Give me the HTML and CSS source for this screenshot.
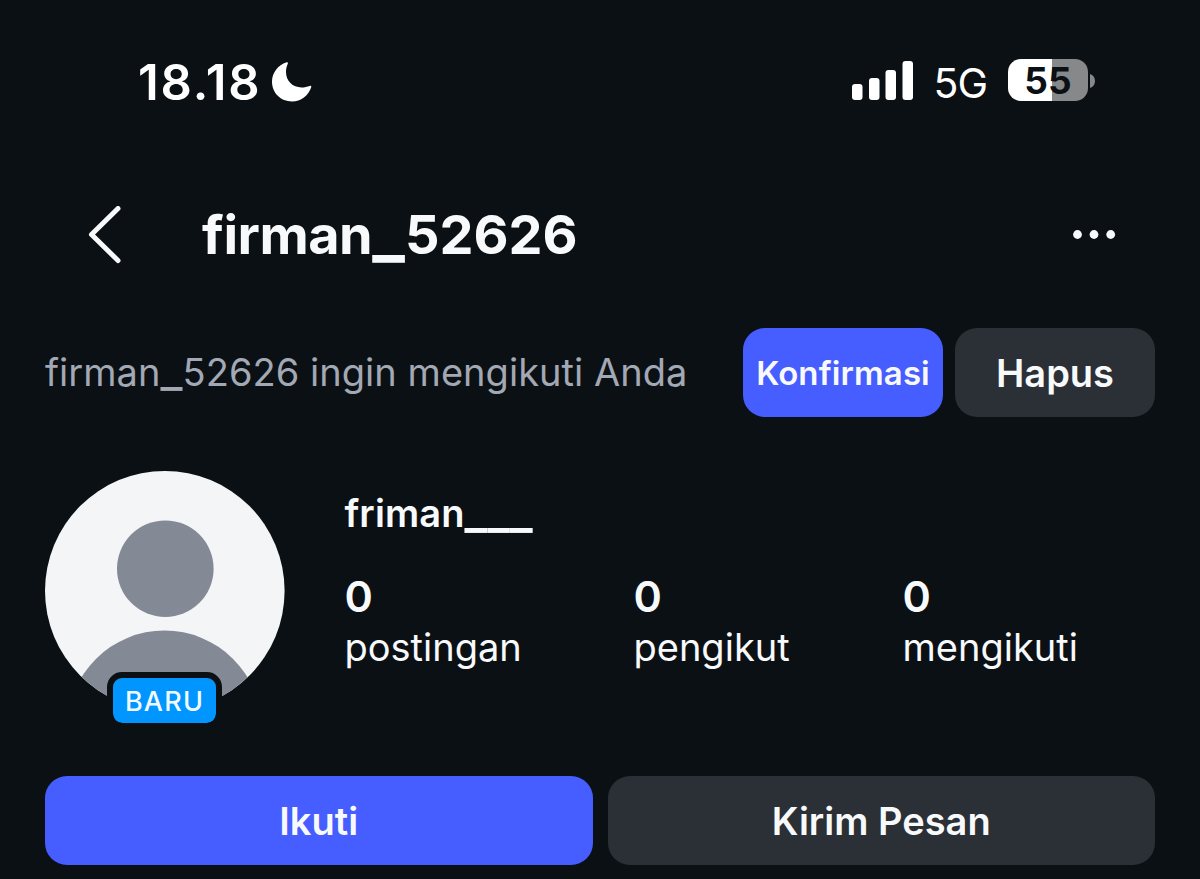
FILE: index.html
```html
<!DOCTYPE html>
<html lang="id">
<head>
    <meta charset="UTF-8">
    <meta name="viewport" content="width=device-width, initial-scale=1.0">
    <title>firman_52626</title>
    <link rel="stylesheet" href="styles.css">
</head>
<body>
    <div class="status-bar">
        <div class="status-left">
            <span class="time">18.18</span>
            <svg class="moon" width="40" height="40" viewBox="0 0 40 40">
                <path d="M14.5 0.3C15.6 0 16.2 0.8 15.8 1.8C14.6 4.4 14 7 14 10C14 19 20.5 25.4 29.5 25.4C32.4 25.4 35.4 24.8 37.8 23.9C38.9 23.5 39.6 24.2 39.2 25.3C36.4 33.8 29 39.5 20 39.5C8.8 39.5 0 31 0 19.8C0 10.8 6 3.2 14.5 0.3Z" fill="#fff"/>
            </svg>
        </div>
        <div class="status-right">
            <svg class="signal" width="62" height="40" viewBox="0 0 62 40">
                <rect x="0" y="22" width="10.5" height="16" rx="3" fill="#fff"/>
                <rect x="17" y="16" width="10.5" height="22" rx="3" fill="#fff"/>
                <rect x="33.5" y="8" width="10.5" height="30" rx="3" fill="#fff"/>
                <rect x="50.5" y="-1" width="10.5" height="39" rx="3" fill="#fff"/>
            </svg>
            <span class="network">5G</span>
            <div class="battery">55</div>
            <svg class="battery-tip" width="5" height="14" viewBox="0 0 5 14">
                <path d="M0 0C3 1 5 3.5 5 7C5 10.5 3 13 0 14Z" fill="#86888a"/>
            </svg>
        </div>
    </div>

    <div class="header">
        <svg class="back" width="34" height="58" viewBox="0 0 34 58">
            <path d="M31 2.5L4.5 28.5L31 54.5" fill="none" stroke="#f7f9fb" stroke-width="5" stroke-linecap="round" stroke-linejoin="round"/>
        </svg>
        <h1><span class="name">firman</span><span class="line">_</span>52626</h1>
        <svg class="more" width="44" height="10" viewBox="0 0 44 10">
            <circle cx="4.5" cy="4.5" r="4.4" fill="#f7f9fb"/>
            <circle cx="21" cy="4.5" r="4.4" fill="#f7f9fb"/>
            <circle cx="37.7" cy="4.5" r="4.4" fill="#f7f9fb"/>
        </svg>
    </div>

    <div class="request">
        <p>firman<span class="line">_</span>52626 ingin mengikuti Anda</p>
        <button class="btn primary small">Konfirmasi</button>
        <button class="btn hapus">Hapus</button>
    </div>

    <div class="profile">
        <div class="avatar">
            <svg width="240" height="240" viewBox="0 0 240 240">
                <clipPath id="circle"><circle cx="119.8" cy="119.8" r="119.8"/></clipPath>
                <g clip-path="url(#circle)">
                    <rect width="240" height="240" fill="#f3f5f7"/>
                    <circle cx="120.3" cy="97.7" r="48.3" fill="#848a95"/>
                    <circle cx="119.5" cy="256.5" r="97" fill="#848a95"/>
                </g>
            </svg>
            <span class="badge">BARU</span>
        </div>
        <div class="info">
            <h2>friman<span class="line">___</span></h2>
            <div class="stats">
                <div class="stat"><b>0</b><span>postingan</span></div>
                <div class="stat"><b>0</b><span>pengikut</span></div>
                <div class="stat"><b>0</b><span>mengikuti</span></div>
            </div>
        </div>
    </div>

    <div class="actions">
        <button class="btn primary">Ikuti</button>
        <button class="btn">Kirim Pesan</button>
    </div>
</body>
</html>
```
FILE: styles.css
```css
* {
    box-sizing: border-box;
    margin: 0;
}

body {
    background: #0b1014;
    color: #f7f9fb;
    font-family: 'Inter', sans-serif;
    height: 879px;
    padding: 0 45px;
    overflow: hidden;
}

svg {
    display: block;
    flex-shrink: 0;
}

/* wide, low underscore */
.line {
    font-size: 1.27em;
    line-height: 0;
    vertical-align: -1px;
}

.status-bar {
    height: 164px;
    padding: 0 60px 0 93px;
    display: flex;
    justify-content: space-between;
    align-items: center;
}

.status-left, .status-right {
    display: flex;
    align-items: center;
}

.time {
    color: #fff;
    font-size: 49px;
    font-weight: 600;
    letter-spacing: 1.8px;
}

.moon {
    margin-left: 11px;
}

.signal {
    overflow: visible;
}

.network {
    margin: 2px 21px 0 19px;
    color: #fff;
    font-size: 41px;
    letter-spacing: -1px;
}

.battery {
    width: 80px;
    height: 42px;
    margin-top: -4px;
    border-radius: 13px;
    background: linear-gradient(to right, #fff 44px, #86888a 44px);
    color: #0b1014;
    font-size: 37px;
    font-weight: 700;
    line-height: 44px;
    text-align: center;
}

.battery-tip {
    margin: -2px 0 0 2px;
}

.header {
    height: 141px;
    padding: 0 38px 0 42px;
    display: flex;
    align-items: center;
}

h1 {
    flex: 1;
    margin-left: 81px;
    font-size: 54px;
    font-weight: 700;
}

.name {
    letter-spacing: -0.5px;
}

.request {
    height: 135px;
    display: flex;
    align-items: center;
}

.request p {
    flex: 1;
    margin-top: -1px;
    color: #a2a8b4;
    font-size: 38px;
    letter-spacing: 0.04px;
    white-space: nowrap;
}

.btn {
    width: 200px;
    height: 89px;
    padding: 0;
    border: none;
    border-radius: 22px;
    background: #2b2f36;
    color: #f7f9fb;
    font-family: inherit;
    font-size: 38px;
    font-weight: 600;
}

.primary {
    background: #465dff;
}

.small {
    font-size: 33px;
    letter-spacing: 0.1px;
}

.hapus {
    margin-left: 12px;
}

.profile {
    padding-top: 31px;
    display: flex;
}

.avatar {
    position: relative;
    width: 240px;
    height: 240px;
}

.badge {
    position: absolute;
    left: 62px;
    top: 201px;
    width: 115px;
    height: 57px;
    border: 6px solid #0b1014;
    border-radius: 15px;
    background: #0095ff;
    background-clip: padding-box;
    color: #f0faff;
    font-size: 27px;
    font-weight: 500;
    line-height: 47px;
    letter-spacing: 1.2px;
    text-align: center;
}

.info {
    margin-left: 59.5px;
    padding-top: 17px;
}

h2 {
    font-size: 38px;
    font-weight: 600;
    line-height: 51px;
    letter-spacing: 0.1px;
}

.stats {
    margin-top: 32px;
    display: grid;
    grid-template-columns: 289px 269px auto;
}

.stat {
    display: flex;
    flex-direction: column;
    align-items: flex-start;
    font-size: 38px;
    line-height: 51px;
}

.stat b {
    font-size: 43px;
    font-weight: 600;
}

.actions {
    margin-top: 65px;
    display: grid;
    grid-template-columns: 1fr 1fr;
    gap: 15px;
}

.actions .btn {
    width: 100%;
}
```
